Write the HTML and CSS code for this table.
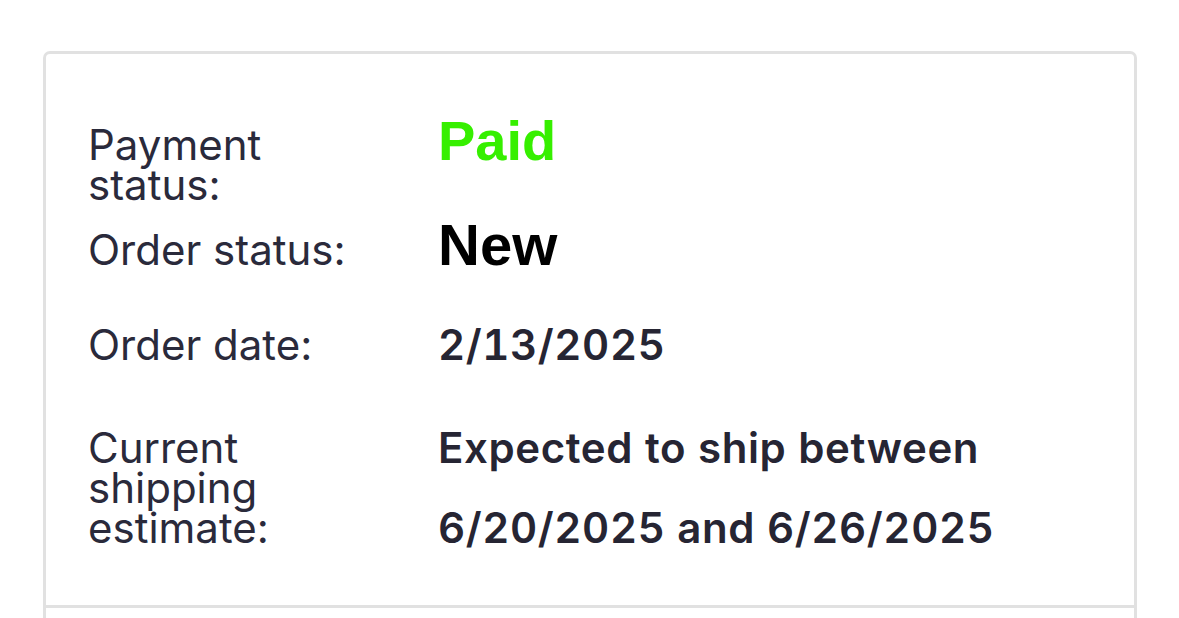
FILE: index.html
```html
<!DOCTYPE html>
<html lang="en">
<head>
<meta charset="utf-8">
<title>Order details</title>
<link rel="stylesheet" href="styles.css">
</head>
<body>
<div class="page">
  <section class="card">
    <div class="card-body">
      <div class="row row-payment">
        <div class="label">Payment<br>status:</div>
        <div class="value value-paid">Paid</div>
      </div>
      <div class="row row-status">
        <div class="label">Order status:</div>
        <div class="value value-new">New</div>
      </div>
      <div class="row row-date">
        <div class="label">Order date:</div>
        <div class="value">2/13/2025</div>
      </div>
      <div class="row row-ship">
        <div class="label">Current<br>shipping<br>estimate:</div>
        <div class="value">Expected to ship between<br>6/20/2025 and 6/26/2025</div>
      </div>
    </div>
    <div class="card-next"></div>
  </section>
</div>
</body>
</html>
```

FILE: styles.css
```css
html, body {
  margin: 0;
  padding: 0;
  background: #ffffff;
  height: 100%;
  overflow: hidden;
}

.page {
  padding: 51px 42px 0 43px;
}

.card {
  border: 3px solid #e1e1e1;
  border-bottom: none;
  border-radius: 7px 7px 0 0;
  background: #ffffff;
}

.card-body {
  padding: 57px 42px 37px 42px;
  border-bottom: 3px solid #e1e1e1;
}

.card-next {
  height: 120px;
}

.row {
  display: flex;
  align-items: baseline;
}

.row-status { margin-top: 10px; }
.row-date { margin-top: 30px; }
.row-ship { margin-top: 23px; }

.label {
  flex: none;
  width: 350px;
  font-family: Inter, "Liberation Sans", sans-serif;
  font-weight: 400;
  font-size: 42px;
  line-height: 40px;
  color: #2a2a3b;
}

.value {
  font-family: Inter, "Liberation Sans", sans-serif;
  font-weight: 600;
  font-size: 42px;
  line-height: 80px;
  letter-spacing: 0.6px;
  font-feature-settings: "tnum";
  color: #262533;
}

.value-paid {
  font-family: "Liberation Sans", Arial, sans-serif;
  font-weight: 700;
  font-size: 56px;
  line-height: 60px;
  letter-spacing: 0;
  color: #36ef00;
}

.value-new {
  font-family: "Liberation Sans", Arial, sans-serif;
  font-weight: 700;
  font-size: 58px;
  line-height: 60px;
  letter-spacing: 0;
  color: #000000;
}
```
